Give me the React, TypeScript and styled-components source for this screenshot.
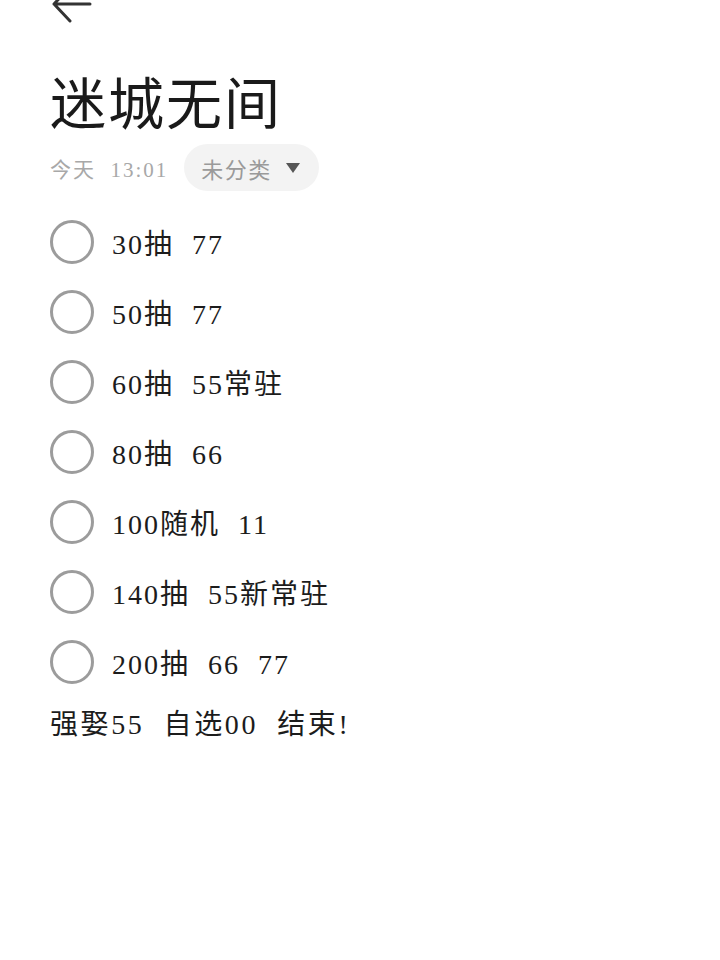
import styled, { createGlobalStyle } from "styled-components";

const GlobalStyle = createGlobalStyle`
  html, body {
    margin: 0;
    padding: 0;
    background: #ffffff;
  }
  body {
    font-family: "Liberation Serif", "Noto Sans CJK SC", serif;
    color: #1c1c1c;
  }
`;

const StyledPage = styled.div`
  width: 720px;
  min-height: 960px;
  padding: 0 50px;
  box-sizing: border-box;
`;

const StyledTopBar = styled.div`
  height: 26px;
  display: flex;
  align-items: flex-end;
  overflow: hidden;
`;

const StyledTitle = styled.h1`
  margin: 44px 0 0;
  font-size: 56px;
  font-weight: 400;
  line-height: 70px;
  letter-spacing: 2px;
  color: #1a1a1a;
`;

const StyledMeta = styled.div`
  display: flex;
  align-items: center;
  gap: 16px;
  margin-top: 4px;
`;

const StyledTime = styled.span`
  font-size: 21px;
  color: #a8a8a8;
  letter-spacing: 2px;
  white-space: pre;
`;

const StyledCategory = styled.div`
  display: flex;
  align-items: center;
  gap: 14px;
  height: 47px;
  padding: 0 19px 0 17px;
  border-radius: 24px;
  background: #f3f3f3;
  font-size: 22px;
  color: #9a9a9a;
  letter-spacing: 1.5px;
`;

const StyledList = styled.div`
  display: flex;
  flex-direction: column;
  margin-top: 16px;
`;

const StyledItem = styled.div`
  display: flex;
  align-items: center;
  height: 70px;
  gap: 18px;
`;

const StyledCheck = styled.div`
  width: 38px;
  height: 38px;
  border: 3px solid #9c9c9c;
  border-radius: 50%;
  flex-shrink: 0;
`;

const StyledText = styled.span`
  font-size: 28px;
  letter-spacing: 2px;
  white-space: pre;
  color: #1c1c1c;
`;

const StyledNote = styled.div`
  margin-top: 5px;
  font-size: 28px;
  letter-spacing: 2.6px;
  white-space: pre;
  color: #1c1c1c;
`;

const items = [
  "30抽  77",
  "50抽  77",
  "60抽  55常驻",
  "80抽  66",
  "100随机  11",
  "140抽  55新常驻",
  "200抽  66  77",
];

export default function App() {
  return (
    <StyledPage>
      <GlobalStyle />
      <StyledTopBar>
        <svg width="42" height="44" viewBox="0 0 42 44" fill="none">
          <path
            d="M40 22H4M20 5L4 22l16 17"
            stroke="#333"
            strokeWidth="3"
            strokeLinecap="round"
            strokeLinejoin="round"
          />
        </svg>
      </StyledTopBar>
      <StyledTitle>迷城无间</StyledTitle>
      <StyledMeta>
        <StyledTime>今天  13:01</StyledTime>
        <StyledCategory>
          未分类
          <svg width="14" height="10" viewBox="0 0 14 10">
            <path d="M0 0h14L7 10z" fill="#555" />
          </svg>
        </StyledCategory>
      </StyledMeta>
      <StyledList>
        {items.map((t) => (
          <StyledItem key={t}>
            <StyledCheck />
            <StyledText>{t}</StyledText>
          </StyledItem>
        ))}
      </StyledList>
      <StyledNote>强娶55  自选00  结束!</StyledNote>
    </StyledPage>
  );
}
